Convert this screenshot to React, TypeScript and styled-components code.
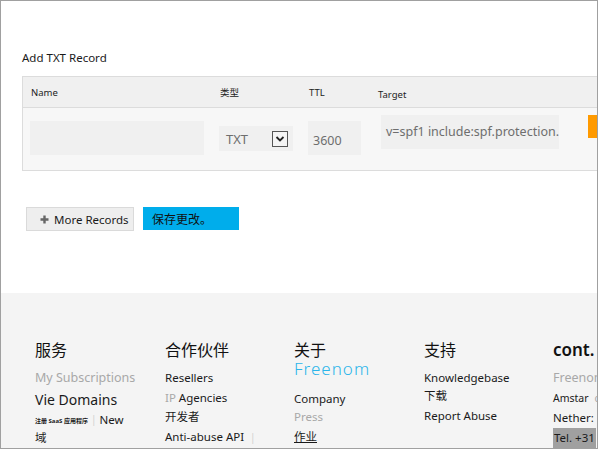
import React from 'react';
import styled, { createGlobalStyle } from 'styled-components';

const GlobalStyle = createGlobalStyle`
  html, body {
    margin: 0;
    padding: 0;
    background: #ffffff;
  }
  body {
    font-family: "Noto Sans", "Noto Sans CJK SC", sans-serif;
    color: #1a1a1a;
  }
`;

const Frame = styled.div`
  width: 598px;
  height: 449px;
  box-sizing: border-box;
  border: 1px solid #a0a0a0;
  overflow: hidden;
  display: flex;
  flex-direction: column;
`;

const Main = styled.div`
  height: 292px;
  flex-shrink: 0;
  padding: 49px 0 0 21px;
  box-sizing: border-box;
  background: #ffffff;
`;

const Title = styled.h3`
  margin: 0 0 10px;
  font-size: 11.5px;
  line-height: 16px;
  font-weight: normal;
  color: #1a1a1a;
`;

const Table = styled.div`
  width: 620px;
  border: 1px solid #dcdcdc;
  border-right: none;
`;

const Row = styled.div<{ $head?: boolean }>`
  display: grid;
  grid-template-columns: 189px 89px 69px 211px auto;
  padding-left: 7px;
  height: ${(p) => (p.$head ? '30px' : '62px')};
  background: ${(p) => (p.$head ? '#f0f0f0' : '#f7f7f7')};
  border-bottom: ${(p) => (p.$head ? '1px solid #dcdcdc' : 'none')};
`;

const HeadCell = styled.div<{ $offset?: number }>`
  font-size: 9.5px;
  color: #222;
  display: flex;
  align-items: center;
  padding-left: 1px;
  padding-top: ${(p) => p.$offset || 0}px;
`;

const Cell = styled.div<{ $top: number; $left?: number }>`
  padding-top: ${(p) => p.$top}px;
  padding-left: ${(p) => p.$left || 0}px;
`;

const Field = styled.div<{ $w: number; $h: number; $size?: number }>`
  width: ${(p) => p.$w}px;
  height: ${(p) => p.$h}px;
  background: #f0f0f0;
  color: #6e6e6e;
  font-size: ${(p) => p.$size || 12}px;
  display: flex;
  align-items: center;
  padding-left: 5px;
  box-sizing: border-box;
  white-space: nowrap;
  overflow: hidden;
`;

const Select = styled(Field)`
  justify-content: space-between;
  padding-right: 5px;
  padding-left: 7px;
`;

const Arrow = styled.span`
  width: 16px;
  height: 16px;
  box-sizing: border-box;
  border: 1px solid #555;
  background: #f4f4f4;
  display: flex;
  align-items: center;
  justify-content: center;
`;

const OrangeButton = styled.div`
  width: 40px;
  height: 23px;
  background: #ff9a00;
`;

const Actions = styled.div`
  display: flex;
  gap: 9px;
  margin-top: 36px;
  margin-left: 4px;
`;

const GrayButton = styled.div`
  height: 24px;
  width: 108px;
  box-sizing: border-box;
  background: #eeeeee;
  border: 1px solid #dadada;
  display: flex;
  align-items: center;
  padding-left: 13px;
  gap: 5px;
  font-size: 11.5px;
  color: #1a1a1a;
`;

const BlueButton = styled.div`
  height: 23px;
  width: 96px;
  box-sizing: border-box;
  background: #00adeb;
  display: flex;
  align-items: center;
  padding-left: 9px;
  font-size: 12px;
  color: #111;
`;

const Footer = styled.div`
  flex: 1;
  background: #f4f4f4;
  display: grid;
  grid-template-columns: 130px 129px 130px 129px 130px;
  padding: 46px 0 0 34px;
  box-sizing: border-box;
`;

const Column = styled.div`
  display: flex;
  flex-direction: column;
  white-space: nowrap;
`;

const Heading = styled.div<{ $latin?: boolean; $tight?: boolean }>`
  font-size: ${(p) => (p.$latin ? '17px' : '16px')};
  font-weight: ${(p) => (p.$latin ? 600 : 'normal')};
  line-height: 22px;
  color: #111;
  margin-bottom: ${(p) => (p.$tight ? '0' : '7px')};
`;

const SubHeading = styled.div`
  font-size: 17px;
  font-weight: 300;
  line-height: 16px;
  color: #2ab5ea;
  letter-spacing: 1px;
  margin-bottom: 13px;
`;

const Item = styled.div<{ $muted?: boolean; $size?: number; $h?: number; $gap?: number }>`
  font-size: ${(p) => p.$size || 11.5}px;
  line-height: ${(p) => p.$h || 20}px;
  color: ${(p) => (p.$muted ? '#a8a8a8' : '#1a1a1a')};
  display: flex;
  align-items: center;
  gap: ${(p) => p.$gap ?? 6}px;
`;

const Faint = styled.span`
  color: #a8a8a8;
`;

const Tiny = styled.span`
  font-size: 6px;
  font-weight: bold;
`;

const Bar = styled.span`
  color: #d0d0d0;
  font-size: 10px;
`;

const Highlight = styled.span`
  background: #a0a0a0;
  padding: 0 1px;
`;

const Underlined = styled.span`
  text-decoration: underline;
`;

function App() {
  return (
    <>
      <GlobalStyle />
      <Frame>
        <Main>
          <Title>Add TXT Record</Title>
          <Table>
            <Row $head>
              <HeadCell>Name</HeadCell>
              <HeadCell>类型</HeadCell>
              <HeadCell $offset={-1}>TTL</HeadCell>
              <HeadCell $offset={4}>Target</HeadCell>
              <div />
            </Row>
            <Row>
              <Cell $top={13}>
                <Field $w={174} $h={34} />
              </Cell>
              <Cell $top={18}>
                <Select $w={74} $h={25} $size={13}>
                  TXT
                  <Arrow>
                    <svg width="10" height="8" viewBox="0 0 10 8">
                      <path d="M1.5 2 L5 5.5 L8.5 2" fill="none" stroke="#222" strokeWidth="1.8" />
                    </svg>
                  </Arrow>
                </Select>
              </Cell>
              <Cell $top={13}>
                <Field $w={53} $h={34} $size={12.5}>
                  <span style={{ paddingTop: 4 }}>3600</span>
                </Field>
              </Cell>
              <Cell $top={7} $left={4}>
                <Field $w={178} $h={34} $size={12.5}>
                  <span style={{ marginTop: -1 }}>v=spf1 include:spf.protection.</span>
                </Field>
              </Cell>
              <Cell $top={7}>
                <OrangeButton />
              </Cell>
            </Row>
          </Table>
          <Actions>
            <GrayButton>
              <svg width="9" height="9" viewBox="0 0 9 9">
                <path d="M4.5 0.5 V8.5 M0.5 4.5 H8.5" stroke="#666" strokeWidth="2.4" />
              </svg>
              More Records
            </GrayButton>
            <BlueButton>保存更改。</BlueButton>
          </Actions>
        </Main>
        <Footer>
          <Column>
            <Heading>服务</Heading>
            <Item $muted $size={12.5}>My Subscriptions</Item>
            <Item $size={14} $h={24}>Vie Domains</Item>
            <Item $h={14} $gap={3}>
              <span>
                <Tiny>注册 SaaS 应用程序</Tiny> <Bar>|</Bar>
              </span>
              <span>New</span>
            </Item>
            <Item $h={20}>域</Item>
          </Column>
          <Column>
            <Heading>合作伙伴</Heading>
            <Item>Resellers</Item>
            <Item>
              <span>
                <Faint>IP</Faint> Agencies
              </span>
            </Item>
            <Item $h={18}>开发者</Item>
            <Item $h={22}>
              Anti-abuse API <Bar>|</Bar>
            </Item>
          </Column>
          <Column>
            <Heading $tight>关于</Heading>
            <SubHeading>Freenom</SubHeading>
            <Item $h={18}>Company</Item>
            <Item $muted $h={18}>Press</Item>
            <Item $h={22}>
              <Underlined>作业</Underlined>
            </Item>
          </Column>
          <Column>
            <Heading>支持</Heading>
            <Item>Knowledgebase</Item>
            <Item $h={16}>下载</Item>
            <Item $h={24}>Report Abuse</Item>
          </Column>
          <Column>
            <Heading $latin>cont.</Heading>
            <Item $muted $size={12.5}>Freenom</Item>
            <Item $size={10.5}>
              Amstar <Faint>c</Faint>
            </Item>
            <Item>
              Nether: <Bar>|</Bar>
            </Item>
            <Item>
              <Highlight>Tel. +31</Highlight>
            </Item>
          </Column>
        </Footer>
      </Frame>
    </>
  );
}

export default App;
